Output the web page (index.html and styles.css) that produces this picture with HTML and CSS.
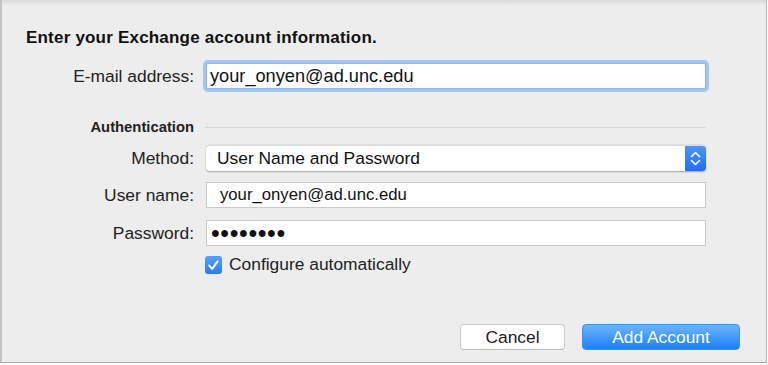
FILE: index.html
```html
<!DOCTYPE html>
<html lang="en">
<head>
    <meta charset="UTF-8">
    <meta name="viewport" content="width=device-width, initial-scale=1.0">
    <title>Add Exchange Account</title>
    <link rel="stylesheet" href="styles.css">
</head>
<body>
    <div class="dialog">
        <h1 class="title">Enter your Exchange account information.</h1>

        <div class="row">
            <label class="label" for="email">E-mail address:</label>
            <div class="field focused">
                <span class="value email-value">your_onyen@ad.unc.edu</span>
            </div>
        </div>

        <div class="row section">
            <span class="section-title">Authentication</span>
            <div class="rule"></div>
        </div>

        <div class="row method-row">
            <label class="label">Method:</label>
            <div class="select">
                <span class="value select-value">User Name and Password</span>
                <span class="stepper">
                    <svg width="21" height="27" viewBox="0 0 21 27">
                        <path d="M6.5 11.5 L10.5 7.5 L14.5 11.5" fill="none" stroke="#fff" stroke-width="1.6" stroke-linecap="round" stroke-linejoin="round"/>
                        <path d="M6.5 15.5 L10.5 19.5 L14.5 15.5" fill="none" stroke="#fff" stroke-width="1.6" stroke-linecap="round" stroke-linejoin="round"/>
                    </svg>
                </span>
            </div>
        </div>

        <div class="row user-row">
            <label class="label">User name:</label>
            <div class="field">
                <span class="value user-value">your_onyen@ad.unc.edu</span>
            </div>
        </div>

        <div class="row pass-row">
            <label class="label">Password:</label>
            <div class="field">
                <span class="value dots">&bull;&bull;&bull;&bull;&bull;&bull;&bull;&bull;</span>
            </div>
        </div>

        <div class="row check-row">
            <div class="check">
                <span class="checkbox">
                    <svg width="17" height="18" viewBox="0 0 17 18">
                        <path d="M4.2 9.6 L7.2 12.8 L12.8 5.2" fill="none" stroke="#fff" stroke-width="2" stroke-linecap="round" stroke-linejoin="round"/>
                    </svg>
                </span>
                <span class="check-label">Configure automatically</span>
            </div>
        </div>

        <div class="footer">
            <button class="btn cancel">Cancel</button>
            <button class="btn primary">Add Account</button>
        </div>
    </div>
</body>
</html>
```

FILE: styles.css
```css
body {
    margin: 0;
    background-color: #fff;
    font-family: "Liberation Sans", Arial, sans-serif;
    color: #1c1c1c;
}

.dialog {
    width: 767px;
    height: 363px;
    box-sizing: border-box;
    background: linear-gradient(#d9d9d9, #ededed 6px) #ededed;
    border-left: 2px solid #c4c4c4;
    border-right: 1px solid #b4b4b4;
    border-bottom: 1px solid #a9a9a9;
    display: flex;
    flex-direction: column;
}

.title {
    margin: 0;
    padding: 28px 0 0 24px;
    font-size: 17px;
    line-height: 20px;
    letter-spacing: 0.2px;
    font-weight: bold;
    color: #111;
}

/* label column + field column */
.row {
    display: grid;
    grid-template-columns: 192px 500px;
    column-gap: 12px;
    align-items: center;
    margin-top: 15px;
}

.label {
    text-align: right;
    font-size: 17.4px;
    color: #222;
}

.field {
    height: 26px;
    box-sizing: border-box;
    background-color: #fff;
    border: 1px solid #c9c9c9;
    display: flex;
    align-items: center;
}

.field.focused {
    border-color: #8db6ea;
    border-radius: 2px;
    box-shadow: 0 0 0 3px #a2c7f2;
}

.value {
    white-space: nowrap;
    color: #111;
}

.email-value {
    padding-left: 3px;
    font-size: 18.2px;
}

.user-value {
    padding-left: 13px;
    font-size: 16.7px;
}

.dots {
    padding-left: 4px;
    font-size: 25px;
    letter-spacing: 0.6px;
    line-height: 20px;
}

.section {
    margin-top: 28px;
    height: 20px;
}

.section-title {
    text-align: right;
    font-size: 14.8px;
    font-weight: bold;
    color: #222;
}

.rule {
    height: 1px;
    background-color: #d6d6d6;
    margin-left: -1px;
}

.method-row {
    margin-top: 8px;
}

.select {
    height: 27px;
    box-sizing: border-box;
    background-color: #fff;
    border-radius: 4px;
    border-top: 1px solid #d9d9d9;
    border-bottom: 1px solid #b3b3b3;
    box-shadow: 0 0 0 0.5px #cfcfcf;
    display: flex;
    align-items: center;
    overflow: hidden;
}

.select-value {
    flex: 1;
    padding-left: 11px;
    font-size: 17.4px;
}

.stepper {
    width: 21px;
    height: 27px;
    background: linear-gradient(#4b98f7, #1d6ff0);
    display: flex;
}

.user-row {
    margin-top: 10px;
}

.pass-row {
    margin-top: 12px;
}

.check-row {
    margin-top: 8px;
}

.check {
    grid-column: 2;
    display: flex;
    align-items: center;
    margin-left: -1px;
}

.checkbox {
    width: 17px;
    height: 18px;
    border-radius: 3px;
    background: linear-gradient(#55a0f8, #2a7cf2);
    display: flex;
}

.check-label {
    margin-left: 7px;
    font-size: 17.4px;
    color: #222;
}

.footer {
    margin-top: auto;
    padding: 0 26px 12px 0;
    display: flex;
    justify-content: flex-end;
    gap: 17px;
}

.btn {
    height: 26px;
    box-sizing: border-box;
    border-radius: 4px;
    font-family: "Liberation Sans", Arial, sans-serif;
    font-size: 17.4px;
    padding: 0;
}

.cancel {
    width: 105px;
    background-color: #fff;
    color: #1c1c1c;
    border: 1px solid #cbcbcb;
    border-bottom-color: #b9b9b9;
}

.primary {
    width: 158px;
    background: linear-gradient(#6db4fb, #1b80fa);
    color: #fff;
    border: 1px solid #3f8ef2;
}
```
